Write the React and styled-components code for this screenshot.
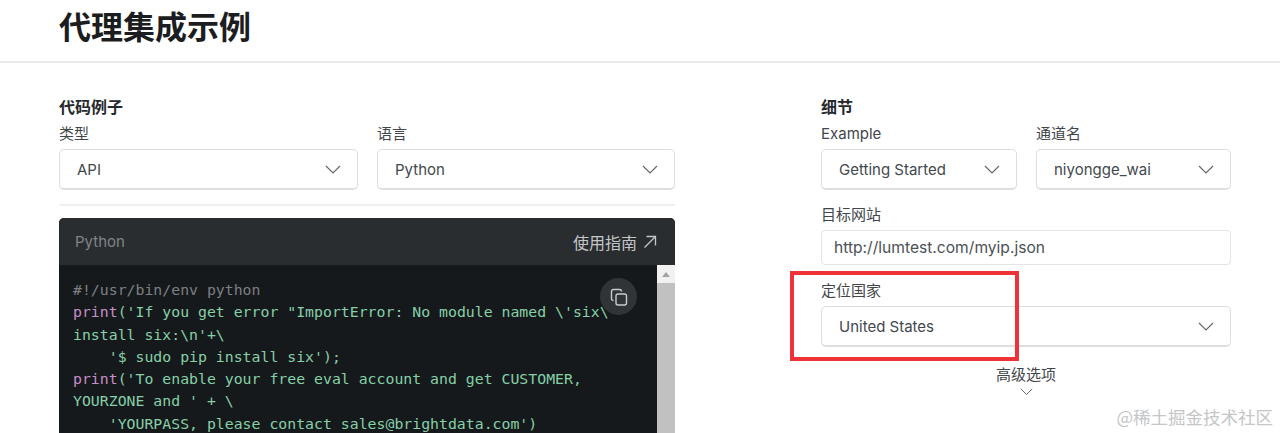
import React from "react";
import styled, { createGlobalStyle } from "styled-components";

const GlobalStyle = createGlobalStyle`
  html, body {
    margin: 0;
    height: 433px;
    overflow: hidden;
    background: #fff;
    font-family: Inter, "Noto Sans CJK SC", sans-serif;
    color: #3b4045;
  }
  * { box-sizing: border-box; }
`;

const Page = styled.div`
  position: relative;
  height: 433px;
  overflow: hidden;
`;

const Header = styled.header`
  height: 63px;
  padding: 9px 0 0 59px;
  border-bottom: 2px solid #e9eaeb;
`;

const Title = styled.h1`
  margin: 0;
  font-size: 32px;
  line-height: 38px;
  font-weight: 700;
  color: #1b1d20;
`;

const Main = styled.main`
  display: grid;
  grid-template-columns: 616px 410px;
  column-gap: 146px;
  padding: 34px 0 0 59px;
`;

const SectionTitle = styled.h2`
  margin: 0 0 5px;
  font-size: 16px;
  line-height: 20px;
  font-weight: 700;
  color: #26292d;
`;

const Row = styled.div`
  display: grid;
  grid-template-columns: ${p => p.$cols};
  column-gap: ${p => p.$gap};
`;

const Field = styled.div`
  margin-top: ${p => p.$top || "0"};
`;

const Label = styled.div`
  font-size: 15px;
  line-height: 20px;
  margin-top: 2px;
  margin-bottom: 5px;
  color: #41464b;
`;

const SelectBox = styled.div`
  display: flex;
  align-items: center;
  justify-content: space-between;
  height: 41px;
  padding: 0 16px 0 17px;
  border: 1px solid #dcdee0;
  border-bottom-width: 2px;
  border-radius: 5px;
  font-size: 15px;
  color: #43484d;
  background: #fff;
`;

const InputBox = styled.div`
  display: flex;
  align-items: center;
  height: 35px;
  padding: 0 12px;
  border: 1px solid #e2e4e6;
  border-radius: 4px;
  font-size: 15.6px;
  color: #4c5156;
`;

const Divider = styled.hr`
  margin: 14px 0 12px;
  border: 0;
  height: 2px;
  background: #eff0f1;
`;

const CodePanel = styled.section`
  position: relative;
  height: 240px;
  border-radius: 5px 5px 0 0;
  overflow: hidden;
  background: #16191b;
`;

const PanelBar = styled.div`
  display: flex;
  align-items: center;
  justify-content: space-between;
  height: 47px;
  padding: 0 18px 0 16px;
  background: #2a2d2f;
`;

const PanelLang = styled.span`
  font-size: 15px;
  color: #7f8487;
`;

const GuideLink = styled.span`
  display: flex;
  align-items: center;
  gap: 6px;
  font-size: 16px;
  color: #c3c6c8;
`;

const CodeArea = styled.div`
  display: flex;
  height: 193px;
`;

const Code = styled.pre`
  flex: 1;
  margin: 0;
  padding: 14px 0 0 14px;
  overflow: hidden;
  font-family: "DejaVu Sans Mono", monospace;
  font-size: 14.83px;
  line-height: 22.3px;
  color: #85d0a8;
`;

const CodeLine = styled.div`
  white-space: pre;
  height: 22.3px;
`;

const Comment = styled.span`
  color: #7b8084;
`;

const Keyword = styled.span`
  color: #c58fc6;
`;

const CopyButton = styled.div`
  position: absolute;
  top: 60px;
  right: 38px;
  width: 37px;
  height: 37px;
  display: flex;
  align-items: center;
  justify-content: center;
  border-radius: 50%;
  background: #303436;
  color: #c9cccd;
`;

const ScrollTrack = styled.div`
  width: 18px;
  padding-top: 1px;
  background: #f1f1f1;
`;

const ScrollArrow = styled.div`
  height: 17px;
  display: flex;
  align-items: center;
  justify-content: center;
  &::before {
    content: "";
    border-left: 4px solid transparent;
    border-right: 4px solid transparent;
    border-bottom: 5px solid #a3a3a3;
  }
`;

const ScrollThumb = styled.div`
  height: 100%;
  background: #c1c1c1;
`;

const Advanced = styled.div`
  display: flex;
  flex-direction: column;
  align-items: center;
  gap: 3px;
  margin-top: 18px;
  font-size: 15px;
  line-height: 20px;
  color: #41464b;
`;

const Highlight = styled.div`
  position: absolute;
  left: 790px;
  top: 271px;
  width: 229px;
  height: 90px;
  border: 4px solid #ef3138;
  pointer-events: none;
`;

const Watermark = styled.div`
  position: absolute;
  right: 7px;
  bottom: 6px;
  font-size: 17.5px;
  line-height: 20px;
  color: #c4c6c8;
  font-family: "Noto Sans CJK SC", sans-serif;
`;

const Chevron = ({ size = 16 }) => (
  <svg width={size} height={(size * 9) / 16} viewBox="0 0 16 9" fill="none" stroke="#63686d" strokeWidth="1.2">
    <path d="M1 1l7 7 7-7" />
  </svg>
);

const ArrowOut = () => (
  <svg width="14" height="14" viewBox="0 0 14 14" fill="none" stroke="#c3c6c8" strokeWidth="1.3">
    <path d="M1.5 12.5L12.5 1.5M3.5 1.5h9v9" />
  </svg>
);

const CopyIcon = () => (
  <svg width="18" height="18" viewBox="0 0 18 18" fill="none" stroke="currentColor" strokeWidth="1.4">
    <rect x="6" y="6" width="10.5" height="11" rx="2" />
    <path d="M3.5 12.5C2.3 12.5 1.5 11.7 1.5 10.5V3.5C1.5 2.3 2.3 1.5 3.5 1.5H9.5C10.7 1.5 11.5 2.3 11.5 3.5" />
  </svg>
);

const Select = ({ value }) => (
  <SelectBox>
    <span>{value}</span>
    <Chevron />
  </SelectBox>
);

const App = () => (
  <Page>
    <GlobalStyle />
    <Header>
      <Title>代理集成示例</Title>
    </Header>
    <Main>
      <div>
        <SectionTitle>代码例子</SectionTitle>
        <Row $cols="299px 298px" $gap="19px">
          <Field>
            <Label>类型</Label>
            <Select value="API" />
          </Field>
          <Field>
            <Label>语言</Label>
            <Select value="Python" />
          </Field>
        </Row>
        <Divider />
        <CodePanel>
          <PanelBar>
            <PanelLang>Python</PanelLang>
            <GuideLink>
              使用指南
              <ArrowOut />
            </GuideLink>
          </PanelBar>
          <CodeArea>
            <Code>
              <CodeLine><Comment>#!/usr/bin/env python</Comment></CodeLine>
              <CodeLine><Keyword>print</Keyword>{"('If you get error \"ImportError: No module named \\'six\\"}</CodeLine>
              <CodeLine>{"install six:\\n'+\\"}</CodeLine>
              <CodeLine>{"    '$ sudo pip install six');"}</CodeLine>
              <CodeLine><Keyword>print</Keyword>{"('To enable your free eval account and get CUSTOMER,"}</CodeLine>
              <CodeLine>{"YOURZONE and ' + \\"}</CodeLine>
              <CodeLine>{"    'YOURPASS, please contact sales@brightdata.com')"}</CodeLine>
            </Code>
            <ScrollTrack>
              <ScrollArrow />
              <ScrollThumb />
            </ScrollTrack>
          </CodeArea>
          <CopyButton>
            <CopyIcon />
          </CopyButton>
        </CodePanel>
      </div>
      <div>
        <SectionTitle>细节</SectionTitle>
        <Row $cols="196px 195px" $gap="19px">
          <Field>
            <Label>Example</Label>
            <Select value="Getting Started" />
          </Field>
          <Field>
            <Label>通道名</Label>
            <Select value="niyongge_wai" />
          </Field>
        </Row>
        <Field $top="15px">
          <Label>目标网站</Label>
          <InputBox>http://lumtest.com/myip.json</InputBox>
        </Field>
        <Field $top="16px">
          <Label>定位国家</Label>
          <Select value="United States" />
        </Field>
        <Advanced>
          高级选项
          <Chevron size={13} />
        </Advanced>
      </div>
    </Main>
    <Highlight />
    <Watermark>@稀土掘金技术社区</Watermark>
  </Page>
);

export default App;
